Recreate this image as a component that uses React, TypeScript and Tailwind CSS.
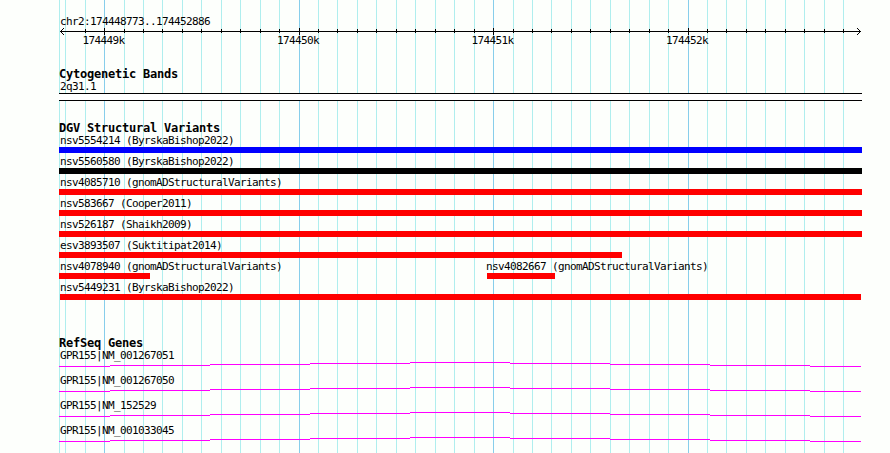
import type { ReactNode } from 'react'

const MAJOR = [104, 299, 493, 688]
const MINOR = [
  65, 85, 124, 143, 162, 182, 201, 221, 240, 260, 279, 318, 337, 357, 376, 396, 415, 435, 454, 474,
  513, 532, 551, 571, 590, 610, 629, 649, 668, 707, 726, 746, 765, 785, 804, 824, 843,
]
const LABELS = ['174449k', '174450k', '174451k', '174452k']

type Variant = { id: string; study: string; start: number; end: number; color: string }

// start / end are pixels from the left edge of the panel
const VARIANTS: Variant[][] = [
  [{ id: 'nsv5554214', study: 'ByrskaBishop2022', start: 0, end: 803, color: 'bg-[#0000ff]' }],
  [{ id: 'nsv5560580', study: 'ByrskaBishop2022', start: 0, end: 803, color: 'bg-black' }],
  [{ id: 'nsv4085710', study: 'gnomADStructuralVariants', start: 0, end: 803, color: 'bg-[#ff0000]' }],
  [{ id: 'nsv583667', study: 'Cooper2011', start: 0, end: 803, color: 'bg-[#ff0000]' }],
  [{ id: 'nsv526187', study: 'Shaikh2009', start: 0, end: 803, color: 'bg-[#ff0000]' }],
  [{ id: 'esv3893507', study: 'Suktitipat2014', start: 0, end: 563, color: 'bg-[#ff0000]' }],
  [
    { id: 'nsv4078940', study: 'gnomADStructuralVariants', start: 0, end: 91, color: 'bg-[#ff0000]' },
    { id: 'nsv4082667', study: 'gnomADStructuralVariants', start: 428, end: 496, color: 'bg-[#ff0000]' },
  ],
  [{ id: 'nsv5449231', study: 'ByrskaBishop2022', start: 1, end: 802, color: 'bg-[#ff0000]' }],
]

const GENES = ['NM_001267051', 'NM_001267050', 'NM_152529', 'NM_001033045']

function Grid() {
  return (
    <svg className="absolute inset-0" width="890" height="453" shapeRendering="crispEdges">
      {[59, ...MINOR].map(x => <rect key={x} x={x} y={0} width={1} height={453} fill="#afeeee" />)}
      {MAJOR.map(x => <rect key={x} x={x} y={0} width={1} height={453} fill="#87ceeb" />)}
    </svg>
  )
}

function Ruler() {
  return (
    <svg className="block -ml-[59px]" width="890" height="8" viewBox="0 28 890 8" shapeRendering="crispEdges">
      <rect x={60} y={31} width={801} height={1} />
      {[1, 2, 3].map(i => (
        <g key={i}>
          <rect x={60 + i} y={31 - i} width={1} height={1} />
          <rect x={60 + i} y={31 + i} width={1} height={1} />
          <rect x={860 - i} y={31 - i} width={1} height={1} />
          <rect x={860 - i} y={31 + i} width={1} height={1} />
        </g>
      ))}
      {MINOR.slice(1).map(x => <rect key={x} x={x} y={29} width={1} height={4} />)}
      {MAJOR.map(x => <rect key={x} x={x} y={28} width={1} height={7} />)}
    </svg>
  )
}

function Title({ children }: { children: ReactNode }) {
  return <h2 className="h-[12px] text-[12px] leading-[13px] font-bold tracking-[-0.22px]">{children}</h2>
}

function VariantRow({ items }: { items: Variant[] }) {
  return (
    <div className="flex h-[21px]">
      {items.map((v, i) => (
        <div key={v.id} style={{ marginLeft: v.start - (i ? items[i - 1].end : 0), width: v.end - v.start }}>
          <div className={v.start === 0 ? 'h-[13px] pl-px' : v.start === 1 ? 'h-[13px]' : 'h-[13px] -ml-px'}>{v.id} ({v.study})</div>
          <div className={`h-[6px] ${v.color}`} />
        </div>
      ))}
    </div>
  )
}

function Gene({ name }: { name: string }) {
  return (
    <div className="h-[25px]">
      <div className="h-[13px] pl-px">GPR155|{name}</div>
      <svg className="block" width="802" height="5" shapeRendering="crispEdges">
        {[4, 3, 2, 1, 0, 1, 2, 3, 4].map((y, i) => {
          const x = i ? i * 100 - 49 : 0
          return <rect key={i} x={x} y={y} width={Math.min(i * 100 + 51, 802) - x} height={1} fill="#ff00ff" />
        })}
      </svg>
    </div>
  )
}

export default function App() {
  return (
    <div className="relative h-[453px] w-[890px] overflow-hidden bg-[#fdfffc] text-black">
      <Grid />
      <main className="relative flex h-full flex-col pl-[59px] pt-[15px] font-['DejaVu_Sans_Mono',monospace] text-[11px] leading-[14px] tracking-[-0.62px] whitespace-nowrap">
        <div className="h-[13px] pl-px">chr2:174448773..174452886</div>
        <Ruler />
        <div className="-mt-[2px] flex h-[34px] gap-[152.5px] pl-[23.5px]">
          {LABELS.map(l => <span key={l} className="w-[42px]">{l}</span>)}
        </div>

        <section className="h-[54px]">
          <Title>Cytogenetic Bands</Title>
          <div className="h-[13px] pl-px">2q31.1</div>
          <div className="h-[8px] w-[803px] border-y border-black bg-white" />
        </section>

        <section className="h-[215px]">
          <Title>DGV Structural Variants</Title>
          {VARIANTS.map(row => <VariantRow key={row[0].id} items={row} />)}
        </section>

        <section>
          <Title>RefSeq Genes</Title>
          {GENES.map(g => <Gene key={g} name={g} />)}
        </section>
      </main>
    </div>
  )
}
